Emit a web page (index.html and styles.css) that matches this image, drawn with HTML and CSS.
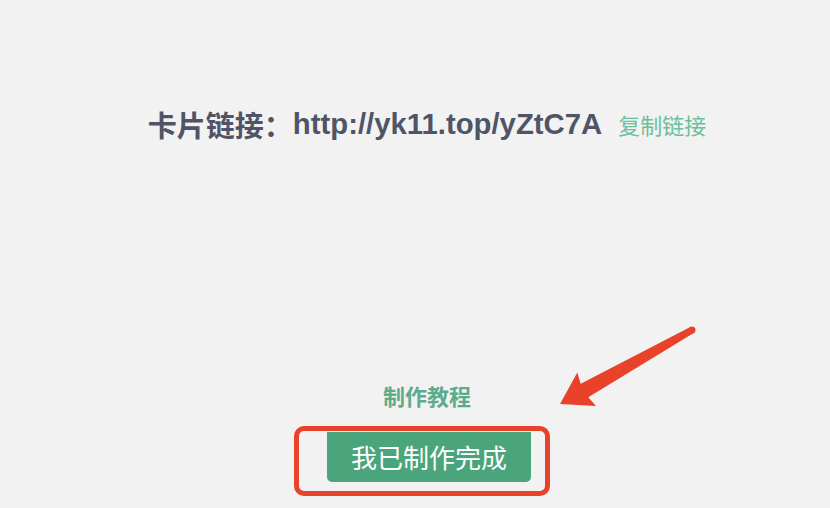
FILE: index.html
```html
<!DOCTYPE html>
<html lang="zh">
<head>
<meta charset="utf-8">
<title>卡片链接</title>
<link rel="stylesheet" href="styles.css">
</head>
<body>
<main class="page">
  <div class="link-row">
    <span class="label">卡片链接：</span><span class="url">http://yk11.top/yZtC7A</span>
    <a class="copy" href="#">复制链接</a>
  </div>
  <a class="tutorial" href="#">制作教程</a>
  <div class="done-wrap">
    <button class="done-btn" type="button">我已制作完成</button>
    <div class="mark-box"></div>
  </div>
</main>
<svg class="arrow" width="830" height="508" viewBox="0 0 830 508" aria-hidden="true">
  <polygon points="560,404 577.3,372.5 580.7,383.8 690.3,326.9 693.7,333.1 588.3,397.2 596,406" fill="#e8432a"/>
  <circle cx="692" cy="330" r="3.5" fill="#e8432a"/>
</svg>
</body>
</html>
```
FILE: styles.css
```css
html, body {
  margin: 0;
  padding: 0;
  background: #f2f2f2;
  width: 830px;
  height: 508px;
  overflow: hidden;
}
body {
  position: relative;
  font-family: "Noto Sans CJK SC", "Liberation Sans", sans-serif;
}
.page {
  display: flex;
  flex-direction: column;
  align-items: center;
  padding-left: 24px;
  padding-top: 104px;
  box-sizing: border-box;
  height: 508px;
}
.link-row {
  display: flex;
  align-items: center;
  height: 40px;
  white-space: nowrap;
}
.label {
  font-size: 29px;
  font-weight: 700;
  color: #4f5567;
  font-family: "Noto Sans CJK SC", sans-serif;
}
.url {
  font-family: "Liberation Sans", Arial, sans-serif;
  font-size: 29.3px;
  font-weight: 700;
  color: #4f5567;
}
.copy {
  margin-left: 16px;
  font-size: 22px;
  color: #6cbf9b;
  text-decoration: none;
  font-family: "Noto Sans CJK SC", sans-serif;
}
.tutorial {
  margin-top: 236px;
  font-size: 22px;
  font-weight: 700;
  color: #5eab8c;
  text-decoration: none;
  line-height: 30px;
}
.done-wrap {
  position: relative;
  margin-top: 22px;
  margin-left: 4px;
}
.done-btn {
  display: block;
  width: 204px;
  height: 50px;
  border: none;
  border-radius: 0 0 5px 5px;
  background: #4aa57c;
  color: #ffffff;
  font-family: "Noto Sans CJK SC", sans-serif;
  font-size: 26px;
  padding: 0;
  line-height: 48px;
}
.mark-box {
  position: absolute;
  left: -33px;
  top: -6px;
  width: 256px;
  height: 70px;
  box-sizing: border-box;
  border: 5.5px solid #e8432a;
  border-radius: 10px;
  pointer-events: none;
}
.arrow {
  position: absolute;
  left: 0;
  top: 0;
  pointer-events: none;
}
```
